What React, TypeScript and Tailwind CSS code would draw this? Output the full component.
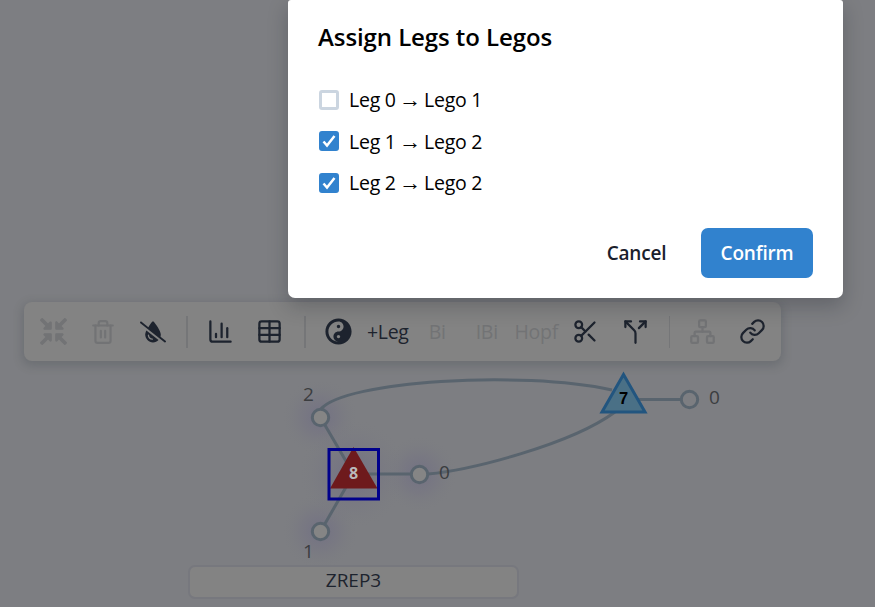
import React from "react";
import { FaCompressArrowsAlt, FaYinYang } from "react-icons/fa";
import { FaDropletSlash } from "react-icons/fa6";
import { ChartColumn, Link, Network, Scissors, Split, Table, Trash2 } from "lucide-react";

const legs = [
  { leg: 0, lego: 1, checked: false },
  { leg: 1, lego: 2, checked: true },
  { leg: 2, lego: 2, checked: true },
];

function Canvas() {
  return (
    <svg className="absolute inset-0" width="875" height="607" viewBox="0 0 875 607">
      <defs>
        <radialGradient id="glow">
          <stop offset="0" stopColor="#706e84" stopOpacity="0.85" />
          <stop offset="0.5" stopColor="#757482" stopOpacity="0.5" />
          <stop offset="1" stopColor="#7b7d80" stopOpacity="0" />
        </radialGradient>
      </defs>
      <circle cx="320" cy="417" r="38" fill="url(#glow)" />
      <circle cx="320" cy="531" r="38" fill="url(#glow)" />
      <circle cx="419" cy="474" r="38" fill="url(#glow)" />
      <circle cx="353" cy="474" r="54" fill="url(#glow)" />
      <g fill="none" stroke="#59646e" strokeWidth="3">
        <path d="M321 409C345 381 520 370 612 390" />
        <path d="M428 474C470 470 570 445 615 412" />
        <path d="M353.5 474L320.5 417.5M353.5 474L320.5 531.5M353.5 474H419M623 399.500H689" />
      </g>
      <g fill="#858585" stroke="#59646e" strokeWidth="3">
        <circle cx="320.5" cy="417.500" r="8.2" />
        <circle cx="320.5" cy="531.500" r="8.2" />
        <circle cx="419.5" cy="474.500" r="8.2" />
        <circle cx="689.5" cy="399.500" r="8.2" fill="#7d7e82" />
      </g>
      <path d="M353.500 447L377.500 488.500H330Z" fill="#6e1a1c" />
      <rect x="329" y="449.500" width="49.500" height="49.500" fill="none" stroke="#00008b" strokeWidth="3" />
      <path d="M623.500 374.500L645 412H602Z" fill="#4a7086" stroke="#22557f" strokeWidth="3" />
      <text x="353.500" y="479" textAnchor="middle" className="fill-[#b9b9b9] font-['Open_Sans',sans-serif] text-[16px] font-bold">8</text>
      <text x="623.500" y="404" textAnchor="middle" className="fill-black font-['Liberation_Sans',sans-serif] text-[16.500px] font-bold">7</text>
      <g className="fill-[#3b3d40] font-['Open_Sans',sans-serif] text-[19px]" textAnchor="middle">
        <text x="308.500" y="401">2</text>
        <text x="308.500" y="558">1</text>
        <text x="444.500" y="479">0</text>
        <text x="714.500" y="404">0</text>
      </g>
    </svg>
  );
}

function Toolbar() {
  const slot = "flex w-[49.5px] shrink-0 items-center justify-center";
  const muted = "text-[#727375]";
  const label = "pt-px text-[19.5px] tracking-[-0.3px]";
  return (
    <div className="relative mt-[302px] ml-6 flex h-[59px] w-[757px] items-center rounded-lg bg-[#838383] pl-[5px] text-[#1d232e] shadow-[0_3px_10px_2px_rgba(50,60,65,0.22)]">
      <div className={`${slot} ${muted}`}><FaCompressArrowsAlt size={27} /></div>
      <div className={`${slot} ${muted}`}><Trash2 size={26} /></div>
      <div className={slot}><FaDropletSlash size={26} /></div>
      <div className="ml-2 h-8 w-0.5 bg-[#757678]" />
      <div className={`${slot} ml-2`}><ChartColumn size={27} /></div>
      <div className={slot}><Table size={27} /></div>
      <div className="ml-[9px] h-8 w-0.5 bg-[#757678]" />
      <div className={`${slot} ml-2`}><FaYinYang size={27} /></div>
      <div className={`${slot} ${label}`}>+Leg</div>
      <div className={`${slot} ${label} ${muted}`}>Bi</div>
      <div className={`${slot} ${label} ${muted}`}>IBi</div>
      <div className={`${slot} ${label} ${muted}`}>Hopf</div>
      <div className={slot}><Scissors size={27} /></div>
      <div className={slot}><Split size={27} /></div>
      <div className="ml-[9px] h-8 w-px bg-[#757678]" />
      <div className={`${slot} ${muted} ml-2`}><Network size={27} /></div>
      <div className={slot}><Link size={27} /></div>
    </div>
  );
}

function AssignDialog() {
  return (
    <div className="absolute top-0 left-[288px] flex h-[298px] w-[555px] flex-col rounded-b-[7px] rounded-t-[3px] bg-white px-[30px] pb-5 shadow-[0_8px_20px_rgba(20,25,30,0.25)]">
      <h2 className="mt-5 h-[34px] text-[24px] leading-[34px] font-semibold tracking-[-0.08px] whitespace-nowrap text-black">
        Assign Legs to Legos
      </h2>
      <div className="mt-[31px] flex flex-col gap-[11.300px]">
        {legs.map(({ leg, lego, checked }) => (
          <label key={leg} className="flex h-[30px] items-center gap-2.5 pl-px text-[19.5px] tracking-[-0.25px] whitespace-nowrap text-black">
            <span className={`flex size-5 items-center justify-center rounded-[3px] border-[3px] ${checked ? "border-[#3182ce] bg-[#3182ce]" : "border-[#cbd5e0]"}`}>
              {checked && (
                <svg className="shrink-0" width="14" height="14" viewBox="0 0 14 14" fill="none" stroke="white" strokeWidth="2.500">
                  <path d="M1.500 7.500L5 11.500L12.500 2" />
                </svg>
              )}
            </span>
            <span className="flex">
              <span className="w-[47px]">Leg {leg}</span>
              <span className="flex w-7 justify-center pt-px font-['Liberation_Sans',sans-serif] text-[22px] leading-[27px]">→</span>
              <span>Lego {lego}</span>
            </span>
          </label>
        ))}
      </div>
      <div className="mt-auto flex justify-end gap-[15px] text-[19px] font-semibold tracking-[-0.2px]">
        <button className="h-[50px] w-[99px] text-[#1a202c]">Cancel</button>
        <button className="h-[50px] w-28 rounded-[7px] bg-[#3182ce] text-white">Confirm</button>
      </div>
    </div>
  );
}

export default function App() {
  return (
    <main className="relative h-[607px] w-[875px] overflow-hidden bg-[#7d7e82] font-['Open_Sans',sans-serif]">
      <Canvas />
      <Toolbar />
      <div className="relative mt-[204px] ml-[188px] flex h-[34px] w-[331px] items-center justify-center rounded-[7px] border-2 border-[#77787e] bg-[#838383] pb-1 text-[19px] text-[#1d232e]">
        ZREP3
      </div>
      <AssignDialog />
    </main>
  );
}
